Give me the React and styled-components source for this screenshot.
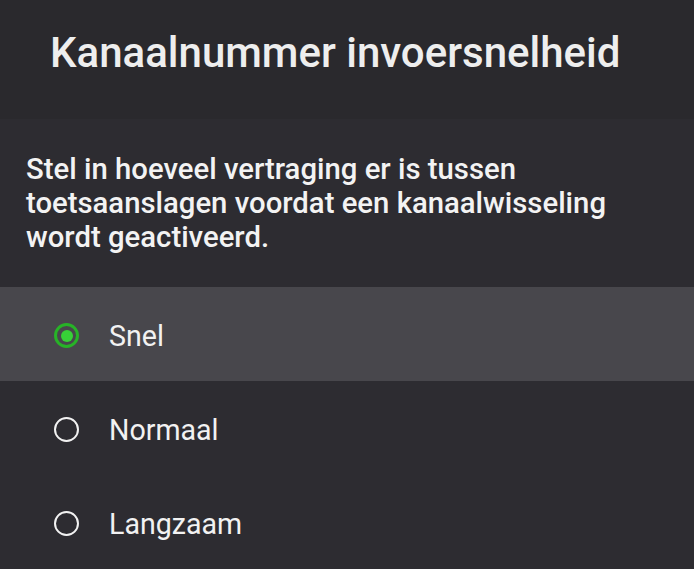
import { useState } from "react"
import styled, { createGlobalStyle } from "styled-components"

const GlobalStyle = createGlobalStyle`
  html, body {
    margin: 0;
    padding: 0;
    background: #2d2c31;
  }
  body {
    font-family: Roboto, "Noto Sans", sans-serif;
    color: #f1f1f1;
  }
`

const Screen = styled.div`
  display: flex;
  flex-direction: column;
  width: 694px;
  height: 569px;
  overflow: hidden;
  background: #2d2c31;
`

const Header = styled.div`
  display: flex;
  align-items: flex-start;
  height: 121px;
  box-sizing: border-box;
  padding: 28px 0 0 50px;
  background: #2a292d;

  & h1 {
    margin: 0;
    font-size: 42px;
    line-height: 49px;
    font-weight: 500;
    color: #eeeeee;
  }
`

const Description = styled.p`
  margin: 0;
  padding: 33px 40px 33px 26px;
  font-size: 29.3px;
  line-height: 34px;
  font-weight: 500;
  color: #f3f3f3;
`

const OptionList = styled.div`
  display: flex;
  flex-direction: column;
`

const OptionRow = styled.div`
  display: flex;
  align-items: center;
  gap: 30px;
  height: 94px;
  padding-left: 54px;
  padding-top: 3px;
  box-sizing: border-box;
  background: ${(p) => (p.$selected ? "#48474c" : "transparent")};
  cursor: pointer;
`

const Radio = styled.div`
  display: flex;
  align-items: center;
  justify-content: center;
  width: 25px;
  height: 25px;
  box-sizing: border-box;
  border-radius: 50%;
  border: ${(p) => (p.$checked ? "3px solid #27b327" : "2px solid #f2f2f2")};

  & span {
    width: 12px;
    height: 12px;
    border-radius: 50%;
    background: #37d137;
  }
`

const Label = styled.span`
  font-size: 28.6px;
  color: #f2f2f2;
`

const options = ["Snel", "Normaal", "Langzaam"]

const App = () => {
  const [selected, setSelected] = useState("Snel")

  return (
    <Screen>
      <GlobalStyle />
      <Header>
        <h1>Kanaalnummer invoersnelheid</h1>
      </Header>
      <Description>
        Stel in hoeveel vertraging er is tussen toetsaanslagen voordat een kanaalwisseling wordt geactiveerd.
      </Description>
      <OptionList>
        {options.map((option) => (
          <OptionRow key={option} $selected={option === selected} onClick={() => setSelected(option)}>
            <Radio $checked={option === selected}>{option === selected && <span />}</Radio>
            <Label>{option}</Label>
          </OptionRow>
        ))}
      </OptionList>
    </Screen>
  )
}

export default App
